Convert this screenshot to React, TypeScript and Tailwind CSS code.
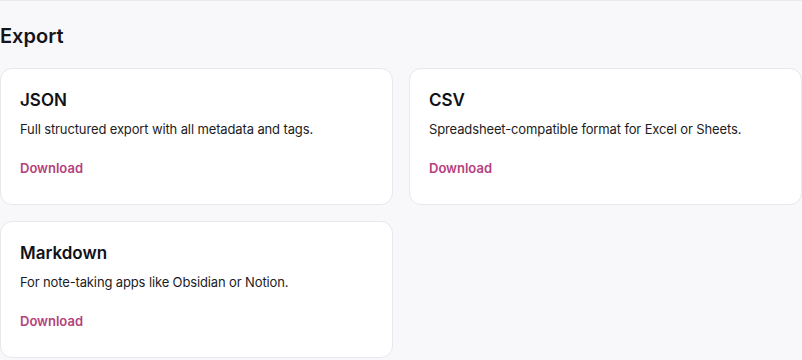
import { useState } from 'react';

type Format = { id: string; title: string; description: string };

const formats: Format[] = [
  { id: 'json', title: 'JSON', description: 'Full structured export with all metadata and tags.' },
  { id: 'csv', title: 'CSV', description: 'Spreadsheet-compatible format for Excel or Sheets.' },
  { id: 'md', title: 'Markdown', description: 'For note-taking apps like Obsidian or Notion.' },
];

function ExportCard({ format, onDownload }: { format: Format; onDownload: (id: string) => void }) {
  return (
    <div className="bg-white border border-[#e7e7ec] rounded-xl px-[19px] pt-[19px] pb-[25px]">
      <h3 className="text-[17px] leading-6 font-semibold text-[#111118]">{format.title}</h3>
      <p className="mt-[7px] text-[13px] leading-5 tracking-[-0.01em] text-[#1c1c24]">{format.description}</p>
      <button
        onClick={() => onDownload(format.id)}
        className="mt-[19px] text-[13px] leading-5 font-semibold text-[#b5417d] hover:underline"
      >
        Download
      </button>
    </div>
  );
}

export default function App() {
  const [, setLast] = useState<string | null>(null);

  return (
    <div
      className="min-h-screen bg-[#f8f8fa] border-t border-[#ebebef]"
      style={{ fontFamily: 'Inter, "Noto Sans", sans-serif' }}
    >
      <h2 className="pt-[21px] text-xl leading-7 font-semibold text-[#14141a]">Export</h2>
      <div className="mt-[18px] grid grid-cols-2 gap-4">
        {formats.map(f => (
          <ExportCard key={f.id} format={f} onDownload={setLast} />
        ))}
      </div>
    </div>
  );
}
